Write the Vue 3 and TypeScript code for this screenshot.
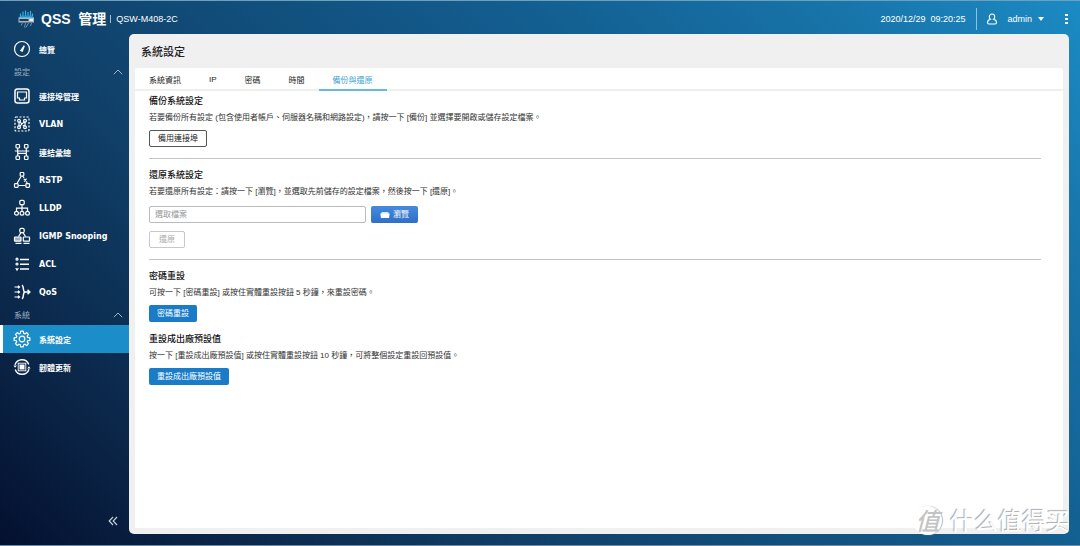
<script setup lang="ts">
import { ref } from 'vue'

type IconName =
  | 'gauge' | 'port' | 'vlan' | 'lag' | 'rstp' | 'lldp'
  | 'igmp' | 'acl' | 'qos' | 'gear' | 'firmware'

interface NavItem {
  icon: IconName
  label: string
}

interface NavGroup {
  title?: string
  items: NavItem[]
}

const groups: NavGroup[] = [
  { items: [{ icon: 'gauge', label: '總覽' }] },
  {
    title: '設定',
    items: [
      { icon: 'port', label: '連接埠管理' },
      { icon: 'vlan', label: 'VLAN' },
      { icon: 'lag', label: '連結彙總' },
      { icon: 'rstp', label: 'RSTP' },
      { icon: 'lldp', label: 'LLDP' },
      { icon: 'igmp', label: 'IGMP Snooping' },
      { icon: 'acl', label: 'ACL' },
      { icon: 'qos', label: 'QoS' },
    ],
  },
  {
    title: '系統',
    items: [
      { icon: 'gear', label: '系統設定' },
      { icon: 'firmware', label: '韌體更新' },
    ],
  },
]

const tabs: string[] = ['系統資訊', 'IP', '密碼', '時間', '備份與還原']
const activeItem = ref('系統設定')
const activeTab = ref('備份與還原')
const fileName = ref('')
</script>

<template>
  <div class="app">
    <header class="topbar">
      <svg class="logo" viewBox="0 0 18 18" aria-hidden="true">
        <g stroke="#2fb4ea" stroke-width="1.200" fill="none">
          <path d="M3.500 3.500v4M6 1.500v5M8.500 .5v6M11 2v5M13.500 1v5M15.500 3.500v3" />
        </g>
        <path d="M1.500 8l2-2.500h11.500l2 2.500z" fill="#1d9ad8" />
        <path d="M1.500 7.500h15.500v5H1.500z" fill="#a9bac6" />
        <path d="M2.500 9h9v2h-9z" fill="#223a4c" />
        <path d="M12.500 9h3.500v2h-3.500z" fill="#e8f3f9" />
        <g stroke="#6d93ae" stroke-width="1" fill="none">
          <path d="M5.500 13l-1.500 2.500M8.500 13l-1 4.500M11.500 13l-2.500 4.500M14.500 13l-1 3" />
        </g>
      </svg>
      <h1 class="brand">QSS&nbsp; 管理</h1>
      <span class="model">QSW-M408-2C</span>
      <time class="clock">2020/12/29&nbsp; 09:20:25</time>
      <button class="user" type="button">
        <svg viewBox="0 0 12 12" class="user-icon" aria-hidden="true">
          <path
            d="M6 1a2.700 2.700 0 0 1 2.700 2.700c0 1.200-.4 2-1.100 2.500 1.800.4 2.900 1.700 2.900 3.400 0 .9-.5 1.400-1.400 1.400H2.900c-.9 0-1.400-.5-1.400-1.400 0-1.700 1.100-3 2.900-3.400-.7-.5-1.100-1.300-1.100-2.500A2.700 2.700 0 0 1 6 1z"
            fill="none" stroke="#fff" stroke-width="1.100"
          />
        </svg>
        <span>admin</span>
        <span class="caret"></span>
      </button>
      <button class="more" type="button" aria-label="更多">
        <i></i><i></i><i></i>
      </button>
    </header>

    <div class="body">
      <nav class="sidebar">
        <div v-for="(group, gi) in groups" :key="gi">
          <button v-if="group.title" class="group" type="button">
            <span>{{ group.title }}</span>
            <svg viewBox="0 0 10 6" class="chevron" aria-hidden="true">
              <path d="M.8 5.200L5 1l4.200 4.200" fill="none" stroke="#9fb3c3" />
            </svg>
          </button>
          <a
            v-for="item in group.items"
            :key="item.label"
            href="#"
            class="item"
            :class="{ active: item.label === activeItem }"
            @click.prevent="activeItem = item.label"
          >
            <svg class="icon" viewBox="0 0 18 18" aria-hidden="true">
              <g v-if="item.icon === 'gauge'">
                <circle cx="9" cy="9" r="7.500" />
                <path d="M7.800 10.500l3.500-4.800-2 5.500z" fill="#fff" />
              </g>
              <g v-else-if="item.icon === 'port'">
                <rect x="2" y="2" width="14" height="14" rx="2.500" stroke-width="1.500" />
                <path d="M4.500 5h9v6h-2v2h-5v-2h-2z" />
              </g>
              <g v-else-if="item.icon === 'vlan'">
                <rect x="2" y="2" width="14" height="14" rx="1" stroke-dasharray="2 1.500" />
                <circle cx="6" cy="5.800" r="1.400" />
                <circle cx="12" cy="5.800" r="1.400" />
                <circle cx="6" cy="12.200" r="1.400" />
                <circle cx="12" cy="12.200" r="1.400" />
                <path d="M6.800 6.800l4.400 4.400M11.200 6.800l-4.400 4.400M6 7v4M12 7v4" />
              </g>
              <g v-else-if="item.icon === 'lag'">
                <rect x="3" y="1.500" width="3.500" height="3.500" rx=".8" />
                <rect x="11.500" y="1.500" width="3.500" height="3.500" rx=".8" />
                <rect x="3" y="13" width="3.500" height="3.500" rx=".8" />
                <rect x="11.500" y="13" width="3.500" height="3.500" rx=".8" />
                <path d="M4.700 5v8M13.300 5v8M1.800 8h14.400M4.700 10.300h8.600" />
              </g>
              <g v-else-if="item.icon === 'rstp'">
                <rect x="7.200" y="1.500" width="3.600" height="3.600" rx=".8" />
                <rect x="1.500" y="12.700" width="3.600" height="3.600" rx=".8" />
                <rect x="12.900" y="12.700" width="3.600" height="3.600" rx=".8" />
                <path d="M8 5.500l-4 7M5.500 14.500h7M10.200 5.500l.8 1.500M13.600 11l.8 1.500M10.800 8l3 2.500M13.500 7.700l-2.300 3" />
              </g>
              <g v-else-if="item.icon === 'lldp'">
                <rect x="6.800" y="1.300" width="4.400" height="4.400" rx="1.200" />
                <path d="M9 5.700v6.500M3.500 12.300V9.200h11v3.100" />
                <circle cx="3.500" cy="14.300" r="1.900" />
                <circle cx="9" cy="14.300" r="1.900" />
                <circle cx="14.500" cy="14.300" r="1.900" />
              </g>
              <g v-else-if="item.icon === 'igmp'">
                <rect x="6.800" y="1.300" width="4.400" height="4.400" rx="1.500" />
                <path d="M8 5.700L5.500 9.500M10 5.700l2.500 3.800" />
                <rect x="1.500" y="10" width="6.500" height="4.200" rx=".5" fill="#fff" fill-opacity=".6" />
                <path d="M2.500 16.400h6M10.500 16.400h6" />
                <rect x="10.300" y="10" width="6.200" height="4.200" rx=".5" />
              </g>
              <g v-else-if="item.icon === 'acl'">
                <path d="M7 4.500h9M7 9.200h9M7 14h9" stroke-width="1.400" />
                <circle cx="4" cy="4.200" r="1" />
                <circle cx="4" cy="9" r="1" />
                <path d="M2.800 13l1.200 2 1.300-2" />
              </g>
              <g v-else-if="item.icon === 'qos'">
                <path d="M1.500 4h5M1.500 9h5M1.500 14h5M5 2.800L6.500 4 5 5.200M5 7.800L6.500 9 5 10.200M5 12.800L6.500 14 5 15.200" />
                <path d="M9 2c2.500 2 .3 5.500 2.600 7-2.300 1.500-.1 5-2.600 7M11.600 9h5M14.500 6.800L16.800 9l-2.300 2.200" stroke-width="1.500" />
              </g>
              <g v-else-if="item.icon === 'gear'">
                <circle cx="9" cy="9" r="2.800" />
                <path
                  stroke-linejoin="round"
                  d="M7.700 1.200h2.600l.4 2.200 1.200.5 1.800-1.300 1.800 1.800-1.300 1.800.5 1.200 2.200.4v2.500l-2.200.4-.5 1.200 1.300 1.800-1.800 1.800-1.800-1.300-1.200.5-.4 2.200H7.700l-.4-2.200-1.200-.5-1.800 1.300-1.800-1.800 1.300-1.800-.5-1.200-2.200-.4V7.800l2.200-.4.5-1.200-1.300-1.800 1.800-1.800 1.800 1.300 1.200-.5z"
                />
              </g>
              <g v-else>
                <path d="M2 6.800A7.300 7.300 0 0 1 15.800 6.500M16 11.200A7.300 7.300 0 0 1 2.200 11.500" stroke-width="1.400" />
                <path d="M.5 7.500h3.400L2 9.800zM17.500 10.500h-3.400L16 8.200z" fill="#fff" stroke="none" />
                <rect x="6.500" y="6.500" width="5" height="5" fill="#fff" stroke="none" />
                <rect x="5.200" y="5.200" width="7.600" height="7.600" stroke-width=".9" />
              </g>
            </svg>
            <span>{{ item.label }}</span>
          </a>
        </div>
        <button class="collapse" type="button" aria-label="收合">
          <svg viewBox="0 0 10 10" aria-hidden="true">
            <path d="M5 1L1.200 5 5 9M9 1L5.200 5 9 9" fill="none" stroke="#c3ced8" stroke-width="1.200" />
          </svg>
        </button>
      </nav>

      <main class="panel">
        <h2 class="title">系統設定</h2>
        <div class="tabs" role="tablist">
          <button
            v-for="tab in tabs"
            :key="tab"
            type="button"
            role="tab"
            class="tab"
            :class="{ selected: tab === activeTab }"
            :aria-selected="tab === activeTab"
            @click="activeTab = tab"
          >{{ tab }}</button>
        </div>
        <div class="content">
          <section class="block ruled">
            <h3>備份系統設定</h3>
            <p>若要備份所有設定 (包含使用者帳戶、伺服器名稱和網路設定)，請按一下 [備份] 並選擇要開啟或儲存設定檔案。</p>
            <button class="btn outline" type="button">備用連接埠</button>
          </section>
          <section class="block ruled">
            <h3><label for="restore-file">還原系統設定</label></h3>
            <p>若要還原所有設定：請按一下 [瀏覽]，並選取先前儲存的設定檔案，然後按一下 [還原]。</p>
            <div class="file-row">
              <input id="restore-file" v-model="fileName" type="text" placeholder="選取檔案" />
              <button class="btn browse" type="button">
                <svg viewBox="0 0 10 8" aria-hidden="true">
                  <path d="M1.500 1h7v2h-7z" fill="#cfe6fa" />
                  <path d="M.3 2.500h9.400L9 7H1z" fill="#fff" />
                </svg>
                <span>瀏覽</span>
              </button>
            </div>
            <button class="btn disabled" type="button" disabled>還原</button>
          </section>
          <section class="block">
            <h3>密碼重設</h3>
            <p>可按一下 [密碼重設] 或按住實體重設按鈕 5 秒鐘，來重設密碼。</p>
            <button class="btn primary" type="button">密碼重設</button>
          </section>
          <section class="block">
            <h3>重設成出廠預設值</h3>
            <p>按一下 [重設成出廠預設值] 或按住實體重設按鈕 10 秒鐘，可將整個設定重設回預設值。</p>
            <button class="btn primary" type="button">重設成出廠預設值</button>
          </section>
        </div>
      </main>
    </div>

    <div class="watermark" lang="zh-Hans">
      <span class="seal">值</span>
      <span>什么值得买</span>
    </div>
  </div>
</template>

<style>
body {
  margin: 0;
}
</style>

<style scoped>
.app {
  position: relative;
  box-sizing: border-box;
  min-height: 100vh;
  display: flex;
  flex-direction: column;
  border-top: 1px solid #6f9fba;
  border-bottom: 1px solid #6c8ba6;
  background: linear-gradient(45deg, #04102f 0%, #0a2345 12%, #10416a 34%, #135f91 66%, #1875aa 85%, #1b8bc4 100%);
  font-family: "Liberation Sans", "Noto Sans CJK TC", sans-serif;
  font-size: 8px;
  color: #fff;
}

button {
  font: inherit;
  color: inherit;
  background: none;
  border: 0;
  padding: 0;
  cursor: pointer;
}

.topbar {
  display: flex;
  align-items: center;
  height: 33px;
  padding: 2px 12px 0 17px;
  box-sizing: border-box;
}

.logo {
  width: 18px;
  height: 18px;
}

.brand {
  margin: 0 0 0 6px;
  font-size: 14px;
  line-height: 20px;
  font-weight: 700;
}

.model {
  margin-left: 4px;
  padding-left: 5px;
  border-left: 1px solid #a9bccb;
  font-size: 9px;
  line-height: 8px;
}

.clock {
  margin-left: auto;
  font-size: 9px;
}

.user {
  display: flex;
  align-items: center;
  margin-left: 11px;
  padding-left: 9px;
  height: 22px;
  border-left: 1px solid #8fc0dc;
  font-size: 9px;
}

.user-icon {
  width: 12px;
  height: 12px;
  margin-right: 9px;
}

.caret {
  margin-left: 6px;
  border: 3px solid transparent;
  border-top: 4px solid #fff;
  border-bottom: 0;
}

.more {
  display: grid;
  gap: 2px;
  margin-left: 21px;
}

.more i {
  width: 3px;
  height: 2px;
  background: #fff;
}

.body {
  flex: 1;
  display: flex;
  padding: 0 11px 11px 0;
}

.sidebar {
  width: 129px;
  flex: none;
  display: flex;
  flex-direction: column;
  padding-top: 1px;
  box-sizing: border-box;
}

.item {
  display: flex;
  align-items: center;
  gap: 8px;
  height: 28px;
  padding-left: 13px;
  font-family: "DejaVu Sans", "Noto Sans CJK TC", sans-serif;
  font-weight: 700;
  color: #fff;
  text-decoration: none;
}

.item.active {
  background: #1b8dc9;
  border-left: 3px solid #fff;
  padding-left: 10px;
}

.icon {
  width: 18px;
  height: 18px;
  fill: none;
  stroke: #fff;
  stroke-width: 1.200;
}

.group {
  display: flex;
  align-items: center;
  justify-content: space-between;
  width: 100%;
  height: 19px;
  padding: 0 6px 2px 14px;
  color: #9db0c1;
}

.chevron {
  width: 10px;
  height: 6px;
}

.collapse {
  margin: auto 11px 8px auto;
}

.collapse svg {
  display: block;
  width: 10px;
  height: 10px;
}

.panel {
  flex: 1;
  min-width: 0;
  display: flex;
  flex-direction: column;
  padding: 0 6px 6px;
  border-radius: 5px;
  background: #f0f0f0;
  color: #222;
}

.title {
  margin: 0;
  padding: 2px 6px 0;
  font-size: 11px;
  line-height: 32px;
  font-weight: 500;
}

.tabs {
  display: flex;
  height: 23px;
  background: #fff;
  border-radius: 2px 2px 0 0;
  box-shadow: inset 0 -2px #efefef;
}

.tab {
  padding: 0 14px;
}

.tab.selected {
  color: #3a9fd3;
  box-shadow: inset 0 -2px #6cb8dd;
}

.content {
  flex: 1;
  padding: 2px 22px 12px 14px;
  background: #fff;
}

.block {
  margin-bottom: 9px;
}

.block.ruled {
  padding-bottom: 11px;
  margin-bottom: 8px;
  border-bottom: 1px solid #c4c4c4;
}

h3 {
  margin: 0;
  font-size: 9px;
  line-height: 17px;
  font-weight: 500;
  color: #111;
}

p {
  margin: 0 0 4px;
  line-height: 16px;
  color: #333;
}

.btn {
  box-sizing: border-box;
  height: 17px;
  padding: 0 8px;
  border-radius: 2px;
  line-height: 15px;
  display: block;
}

.outline {
  border: 1px solid #555;
  color: #222;
}

.primary {
  background: #1a7cc7;
  color: #fff;
}

.disabled {
  padding: 0 9px;
  border: 1px solid #c8c8c8;
  color: #aaa;
  cursor: default;
}

.browse {
  display: flex;
  align-items: center;
  gap: 3px;
  padding: 0 9px;
  background: linear-gradient(#468ade, #2f6fc6);
  color: #fff;
}

.browse svg {
  width: 10px;
  height: 8px;
}

.file-row {
  display: flex;
  gap: 5px;
  margin: 6px 0 8px;
}

.file-row input {
  box-sizing: border-box;
  width: 217px;
  height: 17px;
  padding: 0 5px;
  border: 1px solid #bbb;
  border-radius: 2px;
  font: inherit;
  color: #222;
}

.file-row input::placeholder {
  color: #999;
}

.watermark {
  position: absolute;
  right: 10px;
  bottom: 9px;
  display: flex;
  align-items: center;
  gap: 8px;
  font-family: "Noto Sans CJK SC", sans-serif;
  font-size: 24px;
  line-height: 32px;
  font-weight: 400;
  color: #fff;
  text-shadow: -1px -1px 1px #aaa;
  pointer-events: none;
}

.seal {
  width: 29px;
  height: 29px;
  line-height: 27px;
  text-align: center;
  border-radius: 50%;
  background: #fff;
  box-shadow: 1px 0 1px #bbb;
  color: #c4c4c4;
  font-style: italic;
  font-weight: 500;
  text-shadow: none;
}
</style>
